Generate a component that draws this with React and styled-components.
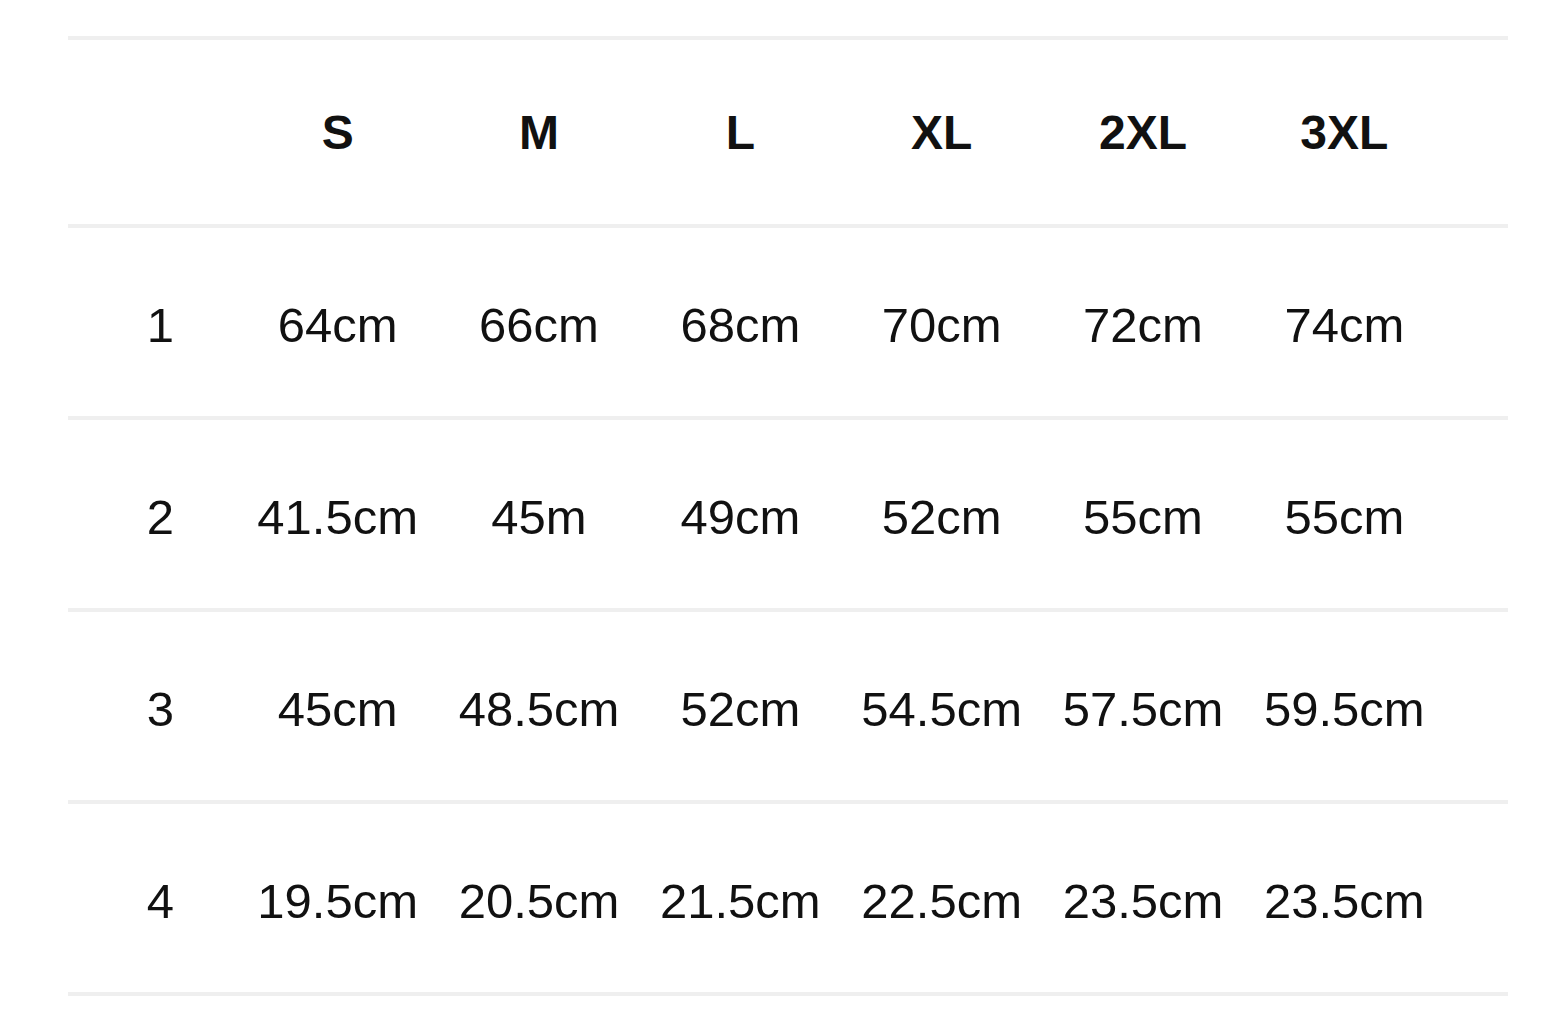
import React from 'react';
import styled, { createGlobalStyle } from 'styled-components';

const sizes = ['S', 'M', 'L', 'XL', '2XL', '3XL'];

const rows = [
    { label: '1', values: ['64cm', '66cm', '68cm', '70cm', '72cm', '74cm'] },
    { label: '2', values: ['41.5cm', '45m', '49cm', '52cm', '55cm', '55cm'] },
    { label: '3', values: ['45cm', '48.5cm', '52cm', '54.5cm', '57.5cm', '59.5cm'] },
    { label: '4', values: ['19.5cm', '20.5cm', '21.5cm', '22.5cm', '23.5cm', '23.5cm'] },
];

const GlobalStyle = createGlobalStyle`
    body{
        margin: 0;
        background: #fff;
        font-family: "Liberation Sans", Arial, sans-serif;
        color: #111;
    }
`;

const App = () => {
    return (
        <>
            <GlobalStyle />
            <SizeTable>
                <Row $head>
                    <LabelCell />
                    {sizes.map(s => <HeadCell key={s}>{s}</HeadCell>)}
                </Row>
                {rows.map(r => (
                    <Row key={r.label}>
                        <LabelCell>{r.label}</LabelCell>
                        {r.values.map((v, i) => <Cell key={i}>{v}</Cell>)}
                    </Row>
                ))}
            </SizeTable>
        </>
    );
};

const SizeTable = styled.div`
    width: 1440px;
    margin: 36px 0 0 68px;
    border-top: 4px solid #efefef;
`;

const Row = styled.div`
    display: grid;
    grid-template-columns: 169px repeat(6, 1fr);
    padding-right: 63px;
    padding-top: ${p => p.$head ? 0 : 6}px;
    box-sizing: border-box;
    height: ${p => p.$head ? 188 : 192}px;
    align-items: center;
    border-bottom: 4px solid #efefef;
`;

const Cell = styled.div`
    text-align: center;
    font-size: 49px;
    font-weight: 400;
    white-space: nowrap;
`;

const HeadCell = styled(Cell)`
    font-size: 48px;
    font-weight: 700;
`;

const LabelCell = styled(Cell)`
    padding-left: 16px;
`;

export default App;
